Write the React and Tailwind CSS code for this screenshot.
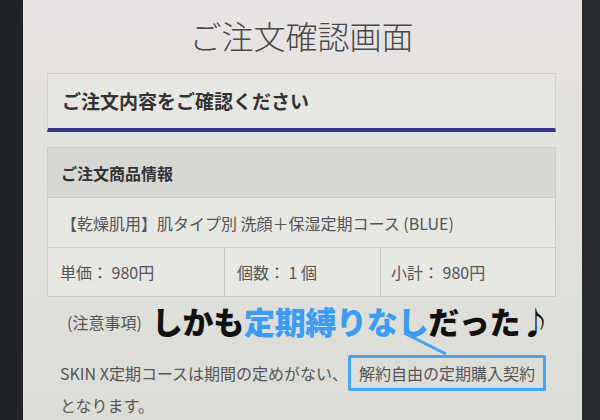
import React from "react";

const jp = { fontFamily: '"Noto Sans CJK JP", "Noto Sans", sans-serif' };

export default function App() {
  return (
    <div className="w-[600px] h-[420px] bg-[#1f2325] flex overflow-hidden" style={jp}>
      <div className="ml-[23px] w-[559px] h-full bg-gradient-to-b from-[#e7e4e3] to-[#dcddd7] pl-[24px] pr-[26px] relative">
        {/* page title */}
        <h1 className="pt-[13px] h-[73px] text-center text-[32px] leading-[44px] font-light text-[#484848]">
          ご注文確認画面
        </h1>

        {/* notice box */}
        <div className="h-[59px] border border-[#cfcfcb] border-b-4 border-b-[#3a3787] bg-[#e6e6e2] flex items-center px-[14px]">
          <span className="text-[19px] font-bold text-[#333]">ご注文内容をご確認ください</span>
        </div>

        {/* order table */}
        <div className="mt-[15px] border border-[#cbcbc8] bg-[#e7e7e3] text-[16px] text-[#555]">
          <div className="h-[50px] bg-[#d7d7d4] flex items-center px-[13px] border-b border-[#cbcbc8]">
            <span className="font-bold text-[#333]">ご注文商品情報</span>
          </div>
          <div className="h-[50px] flex items-center px-[13px] border-b border-[#cbcbc8]">
            【乾燥肌用】肌タイプ別 洗顔＋保湿定期コース (BLUE)
          </div>
          <div className="h-[48px] grid grid-cols-[177px_156px_1fr]">
            <div className="flex items-center px-[12px] border-r border-[#cbcbc8]">単価： 980円</div>
            <div className="flex items-center px-[12px] border-r border-[#cbcbc8]">個数： 1 個</div>
            <div className="flex items-center px-[10px]">小計： 980円</div>
          </div>
        </div>

        {/* notes */}
        <div className="mt-[2px] flex items-center pl-[20px] h-[46px] whitespace-nowrap">
          <span className="text-[16px] text-[#555]">(注意事項)</span>
          <span className="ml-[10px] -mt-[4px] text-[31px] font-black leading-none tracking-[-0.3px] text-[#111]">
            しかも<span className="text-[#3d9cf2]">定期縛りなし</span>だった♪
          </span>
        </div>

        <p className="mt-[10px] pl-[13px] text-[16px] leading-[29px] text-[#555]">
          SKIN X定期コースは期間の定めがない、
          <span className="inline-block border-[3px] border-[#46a2f2] rounded-[2px] px-[8px] leading-[30px]">
            解約自由の定期購入契約
          </span>
          <br />
          となります。
        </p>

        {/* callout connector */}
        <svg className="absolute left-[380px] top-[332px]" width="46" height="26" viewBox="0 0 46 26">
          <line x1="1" y1="1" x2="43" y2="22" stroke="#46a2f2" strokeWidth="3" />
        </svg>
      </div>
      <div className="flex-1 bg-[#25292b]" />
    </div>
  );
}
